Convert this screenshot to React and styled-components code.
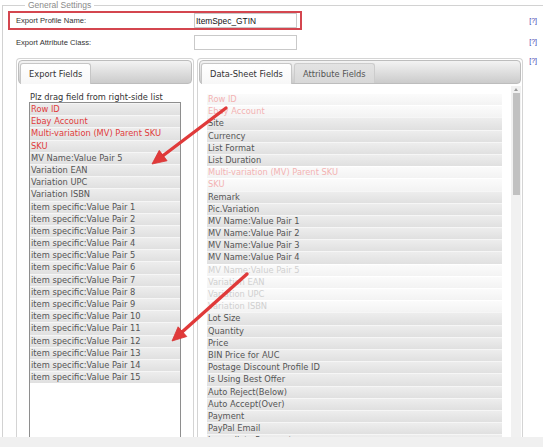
import React from "react";
import styled, { createGlobalStyle, css } from "styled-components";

const GlobalStyle = createGlobalStyle`
  html, body { margin: 0; padding: 0; background: #fff; }
  body { width: 543px; height: 447px; overflow: hidden; font-family: "Liberation Sans", Arial, sans-serif; }
  * { box-sizing: border-box; }
`;

const Page = styled.div`
  position: relative;
  width: 543px;
  height: 447px;
  overflow: hidden;
  display: flex;
  flex-direction: column;
  background: #fff;
`;

const Fieldset = styled.fieldset`
  margin: 0 0 0 2px;
  padding: 1px 0 0 5px;
  height: 437px;
  border: 1px solid #d2d2d2;
  border-right: none;
  border-bottom: none;
  overflow: hidden;
  min-width: 0;
`;

const Legend = styled.legend`
  margin-left: 17px;
  padding: 0 3px;
  font-size: 8.5px;
  line-height: 10px;
  color: #8a8a8a;
`;

const FormRow = styled.div`
  display: flex;
  align-items: center;
  height: ${(p) => p.$h}px;
  margin-top: ${(p) => p.$mt}px;
  padding-right: 6px;
`;

const Highlight = styled.div`
  display: flex;
  align-items: center;
  width: 294px;
  height: 19px;
  border: 2px solid #d4464f;
`;

const Label = styled.span`
  display: block;
  width: ${(p) => p.$w}px;
  padding-left: ${(p) => p.$pl}px;
  font-size: 7.6px;
  color: #333;
  white-space: nowrap;
`;

const TextInput = styled.input`
  width: 103px;
  height: 15px;
  margin: 0;
  padding: 0 0 0 1px;
  border: 1px solid #c9c9c9;
  font-family: "Liberation Sans", Arial, sans-serif;
  font-size: 8.4px;
  color: #111;
  background: #fff;
  outline: none;
`;

const Help = styled.a`
  margin-left: auto;
  font-size: 7px;
  line-height: 8px;
  color: #3b3bb0;
  text-decoration: none;
  align-self: ${(p) => (p.$top ? "flex-start" : "center")};
  margin-top: ${(p) => (p.$top ? "-1px" : "0")};
`;

const PanelsRow = styled.div`
  display: flex;
  align-items: stretch;
  height: 390px;
  margin-top: 8px;
  padding-right: 6px;
`;

const Panel = styled.div`
  display: flex;
  flex-direction: column;
  width: ${(p) => p.$w}px;
  margin-left: ${(p) => p.$ml}px;
  border: 1px solid #d4d4d4;
  border-bottom: none;
  border-radius: 4px 4px 0 0;
  padding: 1px 1px 0;
  background: #fff;
`;

const TabBar = styled.div`
  display: flex;
  align-items: flex-end;
  gap: 2px;
  height: 24px;
  padding: 2px 1px 0;
  border: 1px solid #bdbdbd;
  border-radius: 4px;
  background: linear-gradient(to bottom, #f3f3f3, #cbcbcb);
  flex: none;
`;

const Tab = styled.div`
  height: ${(p) => (p.$active ? 21 : 20)}px;
  margin-bottom: ${(p) => (p.$active ? -1 : 0)}px;
  padding: 0 8px 0 8px;
  border: 1px solid ${(p) => (p.$active ? "#c6c6c6" : "#cccccc")};
  border-bottom: none;
  border-radius: 3px 3px 0 0;
  font-family: "DejaVu Sans", Verdana, sans-serif;
  font-size: 8.3px;
  line-height: 20px;
  white-space: nowrap;
  color: ${(p) => (p.$active ? "#333" : "#555")};
  background: ${(p) =>
    p.$active ? "linear-gradient(to bottom, #ffffff, #f7f7f7)" : "linear-gradient(to bottom, #e3e3e3, #d8d8d8)"};
`;

const LeftBody = styled.div`
  flex: 1;
  display: flex;
  flex-direction: column;
  padding: 8px 11px 0;
  min-height: 0;
`;

const Caption = styled.div`
  padding-left: 1px;
  font-family: "DejaVu Sans", Verdana, sans-serif;
  font-size: 8.3px;
  line-height: 10px;
  color: #333;
  white-space: nowrap;
`;

const FieldList = styled.ul`
  list-style: none;
  margin: 0;
  padding: 0;
  ${(p) =>
    p.$boxed
      ? css`
          flex: 1;
          border: 1px solid #8e8e8e;
          border-bottom: none;
        `
      : css`
          width: 295px;
        `}
`;

const tones = {
  red: "#e03c3c",
  grey: "#555555",
  usedred: "#f3b3b3",
  usedgrey: "#d0d0d0",
};

const Field = styled.li`
  height: 12.2px;
  padding-left: 1px;
  border-top: 1px solid ${(p) => (p.$used ? "#ffffff" : "#f6f6f6")};
  background: ${(p) =>
    p.$used ? "linear-gradient(to bottom, #fbfbfb, #f3f3f3)" : "linear-gradient(to bottom, #ededed, #e0e0e0)"};
  font-family: "DejaVu Sans", Verdana, sans-serif;
  font-size: 8.3px;
  line-height: 11px;
  white-space: nowrap;
  overflow: hidden;
  color: ${(p) => tones[(p.$used ? "used" : "") + p.$tone]};
`;

const RightBody = styled.div`
  flex: 1;
  display: flex;
  padding: 0 0 0 8px;
  min-height: 0;
`;

const ListWrap = styled.div`
  padding-top: 9px;
`;

const ScrollTrack = styled.div`
  margin-left: auto;
  margin-top: 2px;
  width: 10px;
  display: flex;
  flex-direction: column;
  align-items: center;
  background: #f1f1f1;
`;

const ScrollArrow = styled.div`
  margin-top: 2px;
  width: 0;
  height: 0;
  border-left: 2.5px solid transparent;
  border-right: 2.5px solid transparent;
  border-bottom: 3px solid #9a9a9a;
`;

const ScrollThumb = styled.div`
  margin-top: 2px;
  width: 7px;
  height: 102px;
  background: #c1c1c1;
`;

const Footer = styled.div`
  height: 10px;
  background: #f0f0f0;
  flex: none;
`;

const Overlay = styled.svg`
  position: absolute;
  left: 0;
  top: 0;
  pointer-events: none;
`;

const leftFields = [
  ["Row ID", "red"],
  ["Ebay Account", "red"],
  ["Multi-variation (MV) Parent SKU", "red"],
  ["SKU", "red"],
  ["MV Name:Value Pair 5", "grey"],
  ["Variation EAN", "grey"],
  ["Variation UPC", "grey"],
  ["Variation ISBN", "grey"],
  ...Array.from({ length: 15 }, (_, i) => [`item specific:Value Pair ${i + 1}`, "grey"]),
];

const rightFields = [
  ["Row ID", "red", true],
  ["Ebay Account", "red", true],
  ["Site", "grey"],
  ["Currency", "grey"],
  ["List Format", "grey"],
  ["List Duration", "grey"],
  ["Multi-variation (MV) Parent SKU", "red", true],
  ["SKU", "red", true],
  ["Remark", "grey"],
  ["Pic.Variation", "grey"],
  ["MV Name:Value Pair 1", "grey"],
  ["MV Name:Value Pair 2", "grey"],
  ["MV Name:Value Pair 3", "grey"],
  ["MV Name:Value Pair 4", "grey"],
  ["MV Name:Value Pair 5", "grey", true],
  ["Variation EAN", "grey", true],
  ["Variation UPC", "grey", true],
  ["Variation ISBN", "grey", true],
  ["Lot Size", "grey"],
  ["Quantity", "grey"],
  ["Price", "grey"],
  ["BIN Price for AUC", "grey"],
  ["Postage Discount Profile ID", "grey"],
  ["Is Using Best Offer", "grey"],
  ["Auto Reject(Below)", "grey"],
  ["Auto Accept(Over)", "grey"],
  ["Payment", "grey"],
  ["PayPal Email", "grey"],
  ["Immediate Payment", "grey"],
];

function Arrow({ x1, y1, x2, y2 }) {
  const dx = x2 - x1;
  const dy = y2 - y1;
  const len = Math.hypot(dx, dy);
  const ux = dx / len;
  const uy = dy / len;
  const hl = 14;
  const hw = 6.5;
  const bx = x2 - ux * hl;
  const by = y2 - uy * hl;
  const nx = -uy;
  const ny = ux;
  const pts = `${x2},${y2} ${bx + nx * hw},${by + ny * hw} ${bx - nx * hw},${by - ny * hw}`;
  return (
    <g>
      <line x1={x1} y1={y1} x2={bx + ux * 2} y2={by + uy * 2} stroke="#e03a3a" strokeWidth="3.4" strokeLinecap="round" />
      <polygon points={pts} fill="#e03a3a" stroke="#d83434" strokeWidth="0.8" strokeLinejoin="round" />
    </g>
  );
}

export default function App() {
  return (
    <>
      <GlobalStyle />
      <Page>
        <Fieldset>
          <Legend>General Settings</Legend>
          <FormRow $h={19} $mt={0}>
            <Highlight>
              <Label $w={184} $pl={6}>Export Profile Name:</Label>
              <TextInput readOnly defaultValue="ItemSpec_GTIN" />
            </Highlight>
            <Help>[?]</Help>
          </FormRow>
          <FormRow $h={16} $mt={4}>
            <Label $w={186} $pl={8}>Export Attribute Class:</Label>
            <TextInput readOnly defaultValue="" />
            <Help>[?]</Help>
          </FormRow>
          <PanelsRow>
            <Panel $w={178} $ml={8}>
              <TabBar>
                <Tab $active>Export Fields</Tab>
              </TabBar>
              <LeftBody>
                <Caption>Plz drag field from right-side list</Caption>
                <FieldList $boxed>
                  {leftFields.map(([t, tone], i) => (
                    <Field key={i} $tone={tone}>{t}</Field>
                  ))}
                </FieldList>
              </LeftBody>
            </Panel>
            <Panel $w={326} $ml={3}>
              <TabBar>
                <Tab $active>Data-Sheet Fields</Tab>
                <Tab>Attribute Fields</Tab>
              </TabBar>
              <RightBody>
                <ListWrap>
                  <FieldList>
                    {rightFields.map(([t, tone, used], i) => (
                      <Field key={i} $tone={tone} $used={!!used}>{t}</Field>
                    ))}
                  </FieldList>
                </ListWrap>
                <ScrollTrack>
                  <ScrollArrow />
                  <ScrollThumb />
                </ScrollTrack>
              </RightBody>
            </Panel>
            <Help $top>[?]</Help>
          </PanelsRow>
        </Fieldset>
        <Footer />
        <Overlay width="543" height="447" viewBox="0 0 543 447">
          <Arrow x1={226} y1={108} x2={152} y2={164} />
          <Arrow x1={247} y1={274} x2={172} y2={341} />
        </Overlay>
      </Page>
    </>
  );
}
